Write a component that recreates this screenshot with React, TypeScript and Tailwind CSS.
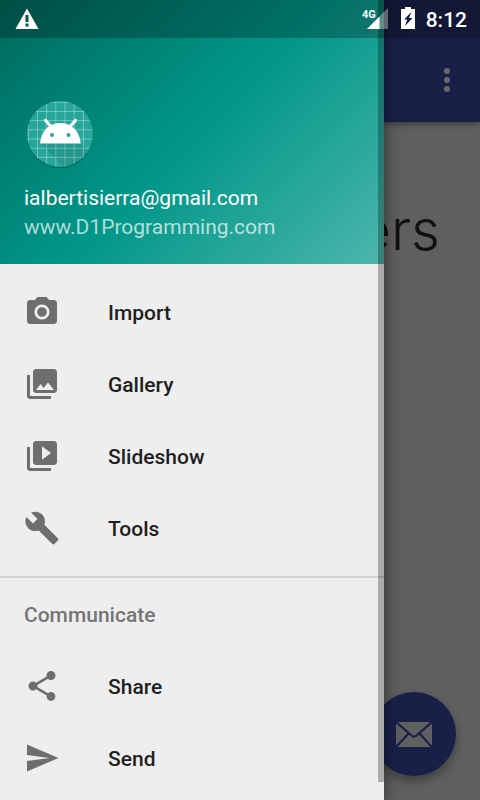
import React from "react";

const camera =
  "M9 2 7.17 4H4c-1.1 0-2 .9-2 2v12c0 1.1.9 2 2 2h16c1.1 0 2-.9 2-2V6c0-1.1-.9-2-2-2h-3.17L15 2H9zm3 15c-2.76 0-5-2.24-5-5s2.24-5 5-5 5 2.24 5 5-2.24 5-5 5zM12 8.8a3.2 3.2 0 1 0 0 6.4 3.2 3.2 0 0 0 0-6.4z";
const gallery =
  "M22 16V4c0-1.100-.9-2-2-2H8c-1.100 0-2 .9-2 2v12c0 1.100.9 2 2 2h12c1.100 0 2-.9 2-2zm-11-4l2.030 2.710L16 11l4 5H8l3-4zM2 6v14c0 1.100.9 2 2 2h14v-2H4V6H2z";
const slideshow =
  "M4 6H2v14c0 1.100.9 2 2 2h14v-2H4V6zm16-4H8c-1.100 0-2 .9-2 2v12c0 1.100.9 2 2 2h12c1.100 0 2-.9 2-2V4c0-1.100-.9-2-2-2zm-8 12.500v-9l6 4.500-6 4.500z";
const tools =
  "M22.700 19l-9.100-9.100c.9-2.300.4-5-1.500-6.900-2-2-5-2.400-7.400-1.300L9 6 6 9 1.600 4.700C.4 7.100.9 10.100 2.900 12.100c1.900 1.900 4.600 2.400 6.900 1.500l9.100 9.100c.4.4 1 .4 1.400 0l2.300-2.300c.5-.4.5-1.100.1-1.400z";
const share =
  "M18 16.080c-.76 0-1.440.3-1.960.77L8.910 12.700c.05-.23.09-.46.09-.7s-.04-.47-.09-.7l7.050-4.110c.54.5 1.250.81 2.040.81 1.660 0 3-1.340 3-3s-1.340-3-3-3-3 1.340-3 3c0 .24.04.47.09.7L8.040 9.810C7.500 9.310 6.790 9 6 9c-1.660 0-3 1.340-3 3s1.340 3 3 3c.79 0 1.500-.31 2.040-.81l7.120 4.160c-.05.21-.08.43-.08.65 0 1.610 1.310 2.920 2.920 2.920s2.920-1.310 2.920-2.920-1.310-2.920-2.920-2.920z";
const send = "M2.010 21L23 12 2.010 3 2 10l15 2-15 2z";

const mainItems = [
  { label: "Import", path: camera },
  { label: "Gallery", path: gallery },
  { label: "Slideshow", path: slideshow },
  { label: "Tools", path: tools },
];

const communicateItems = [
  { label: "Share", path: share },
  { label: "Send", path: send },
];

function NavItem({ label, path }: { label: string; path: string }) {
  return (
    <li>
      <a href="#" className="flex h-[72px] items-center gap-12 px-6 text-[#1f1f1f]">
        <svg viewBox="0 0 24 24" className="size-9 shrink-0 fill-[#6e6e6e]" fillRule="evenodd" aria-hidden="true">
          <path d={path} />
        </svg>
        <span className="pt-0.5">{label}</span>
      </a>
    </li>
  );
}

function Avatar() {
  const lines = [4.3, 13.5, 22.6, 31.8, 41, 50.2, 59.4];
  return (
    <svg viewBox="0 0 72 72" className="size-[72px]" role="img" aria-label="Profile">
      <defs>
        <clipPath id="disc">
          <circle cx="36" cy="36" r="33" />
        </clipPath>
      </defs>
      <circle cx="36" cy="37.2" r="33" fill="#000" opacity="0.25" />
      <g clipPath="url(#disc)">
        <rect width="72" height="72" fill="#26a69a" />
        <g stroke="#fff" strokeOpacity="0.33" strokeWidth="1">
          {lines.map((p) => (
            <path key={p} d={`M${p} 0V72M0 ${p}H72`} />
          ))}
        </g>
        <path d="M16 45 40 69 72 69 72 60 56 45z" fill="#000" opacity="0.08" />
      </g>
      <path d="M21.5 22.5 27 28.5M51.5 22.500 46 28.5" stroke="#fff" strokeWidth="3.2" strokeLinecap="round" />
      <path d="M16 45.500C17 33 25 25 36.300 25s19.400 8 20.400 20.500z" fill="#fff" />
      <circle cx="28" cy="37" r="2" fill="#26a69a" />
      <circle cx="44.500" cy="37" r="2" fill="#26a69a" />
    </svg>
  );
}

function StatusBar() {
  return (
    <div className="absolute inset-x-0 top-0 z-30 flex h-[38px] items-center bg-black/25 pr-[13px] pl-3 text-white">
      <svg viewBox="0 0 24 22" className="ml-[3px] h-[22px] w-6" aria-label="Warning">
        <path d="M12 .5 23.500 21H.5z" fill="#fff" />
        <path d="M10.500 7h3v7h-3zM10.500 15.500h3v3h-3z" fill="#00544a" />
      </svg>
      <div className="ml-auto flex items-center">
        <svg viewBox="0 0 28 24" className="h-6 w-7" aria-label="4G signal">
          <path d="M27 1v21H6z" fill="#fff" opacity="0.35" />
          <path d="M18.500 9.500V22H6z" fill="#fff" />
          <text x="1" y="11" fontSize="11" fontWeight="700" fontFamily="Roboto, sans-serif" fill="#fff">
            4G
          </text>
        </svg>
        <svg viewBox="0 0 14 22" className="mb-0.5 ml-3 h-[22px] w-[14px]" aria-label="Battery charging">
          <path d="M4 0h6v2h4v20H0V2h4z" fill="#fff" />
          <path d="M10.500 5 3 12.500h3.300L4 19 11.500 11H8z" fill="#13183c" />
        </svg>
        <span className="ml-[11px] pt-0.5 text-[21px] leading-6 font-medium">8:12</span>
      </div>
    </div>
  );
}

export default function App() {
  return (
    <div className="relative flex min-h-screen flex-col overflow-hidden bg-[#5f5f5f] font-[Roboto,sans-serif]">
      <header className="flex h-[122px] items-center justify-end bg-[#192048] px-6 pt-[38px] shadow-[0_2px_6px_rgba(0,0,0,0.4)]">
        <button type="button" aria-label="More options" className="flex w-[18px] flex-col items-center gap-[3px]">
          <span className="size-1.5 rounded-full bg-[#686868]" />
          <span className="size-1.5 rounded-full bg-[#686868]" />
          <span className="size-1.5 rounded-full bg-[#686868]" />
        </button>
      </header>
      <main className="flex flex-1 flex-col items-end px-10 pt-[76px]">
        <h1 className="font-[Inter,sans-serif] text-[56px] leading-[64px] font-light text-[#111]">ers</h1>
      </main>
      <button
        type="button"
        aria-label="Compose message"
        className="absolute right-6 bottom-6 flex size-[84px] items-center justify-center rounded-full bg-[#192048] shadow-[0_5px_10px_rgba(0,0,0,0.35)]"
      >
        <svg viewBox="0 0 36 25" className="h-[25px] w-9" aria-hidden="true">
          <rect width="36" height="25" rx="1.500" fill="#606060" />
          <path d="M0 0 15.500 13.500Q18 15.500 20.500 13.500L36 0M0 25 12.500 11.500M36 25 23.500 11.500" fill="none" stroke="#192048" strokeWidth="2.200" />
        </svg>
      </button>

      <aside className="absolute inset-y-0 left-0 z-20 w-4/5 overflow-hidden bg-[#eeeeee] text-[21px] leading-7 shadow-[0_0_16px_rgba(0,0,0,0.5)]">
        <div className="flex h-[264px] flex-col justify-end bg-linear-[135deg,#00695c,#009688_50%,#4db6ac] px-6 pb-[22px] leading-[29px] text-white">
          <Avatar />
          <p className="mt-3.5">ialbertisierra@gmail.com</p>
          <p className="text-white/70">www.D1Programming.com</p>
        </div>
        <nav className="pt-3 font-medium">
          <ul>
            {mainItems.map((item) => (
              <NavItem key={item.label} {...item} />
            ))}
          </ul>
          <div className="mt-3 border-t-2 border-[#d0d0d0]">
            <h2 className="flex h-[72px] items-center px-6 pt-0.5 text-[#757575]">Communicate</h2>
            <ul>
              {communicateItems.map((item) => (
                <NavItem key={item.label} {...item} />
              ))}
            </ul>
          </div>
        </nav>
        <div className="absolute top-0 right-0 bottom-[18px] w-1.5 bg-black/28" />
      </aside>
      <StatusBar />
    </div>
  );
}
